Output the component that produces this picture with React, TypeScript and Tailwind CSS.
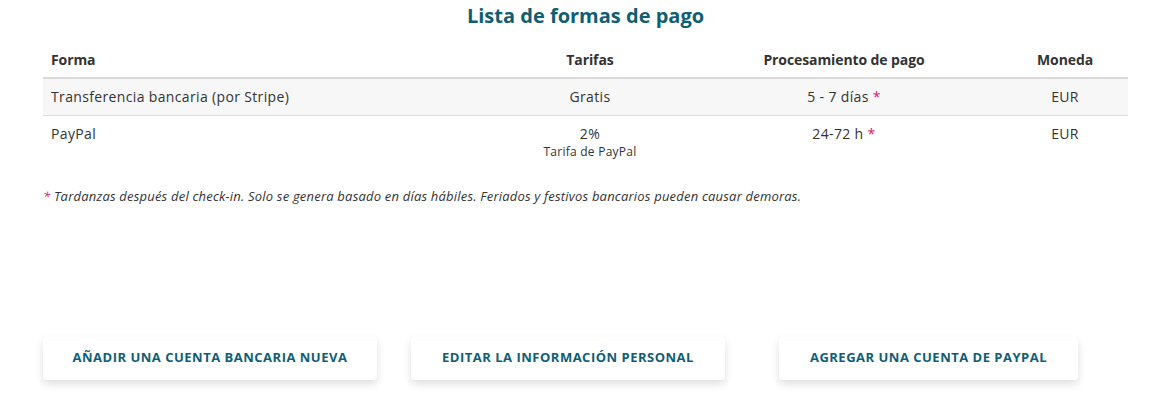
const font = { fontFamily: '"Open Sans", "Liberation Sans", sans-serif' };

function Star() {
  return <span className="text-[#d5206f]">*</span>;
}

const rows = [
  { forma: "Transferencia bancaria (por Stripe)", tarifa: "Gratis", nota: "", proc: "5 - 7 días", moneda: "EUR" },
  { forma: "PayPal", tarifa: "2%", nota: "Tarifa de PayPal", proc: "24-72 h", moneda: "EUR" },
];

const btn =
  "h-[43px] rounded bg-white shadow-[0_4px_9px_rgba(0,0,0,0.13)] text-[13px] font-bold tracking-[0.5px] text-[#0f5e75]";

export default function App() {
  return (
    <div className="w-[1153px] h-[416px] bg-white text-[#333] overflow-hidden" style={font}>
      <div className="pl-[43px] pr-[25px] pt-[3px]">
        <h1 className="text-center text-[20px] font-bold leading-[26px] text-[#0f5e75]">Lista de formas de pago</h1>

        <table className="w-full mt-[13px] border-collapse text-[14px] leading-[18px] tracking-[0.35px]">
          <thead>
            <tr className="border-b-2 border-[#d9d9d9] text-[14px] tracking-[-0.1px]">
              <th className="w-[451px] h-[36px] px-2 text-left font-bold">Forma</th>
              <th className="w-[192px] font-bold text-center">Tarifas</th>
              <th className="w-[316px] font-bold text-center">Procesamiento de pago</th>
              <th className="font-bold text-center">Moneda</th>
            </tr>
          </thead>
          <tbody>
            {rows.map((r, i) => (
              <tr key={r.forma} className={i === 0 ? "bg-[#f7f7f7] border-b border-[#dedede]" : ""}>
                <td className="px-2 h-[37px] align-top pt-[9px]">{r.forma}</td>
                <td className="text-center align-top pt-[9px]">
                  <div>{r.tarifa}</div>
                  {r.nota && <div className="text-[12px] leading-[18px] tracking-[0.25px] pb-[5px]">{r.nota}</div>}
                </td>
                <td className="text-center align-top pt-[9px]">
                  {r.proc} <Star />
                </td>
                <td className="text-center align-top pt-[9px]">{r.moneda}</td>
              </tr>
            ))}
          </tbody>
        </table>

        <p className="mt-[21px] text-[13px] leading-[18px] tracking-[0.2px] italic">
          <Star /> Tardanzas después del check-in. Solo se genera basado en días hábiles. Feriados y festivos bancarios pueden causar demoras.
        </p>

        <div className="flex mt-[132px]">
          <button className={`${btn} w-[334px]`}>AÑADIR UNA CUENTA BANCARIA NUEVA</button>
          <button className={`${btn} ml-[34px] w-[314px]`}>EDITAR LA INFORMACIÓN PERSONAL</button>
          <button className={`${btn} ml-[54px] w-[299px]`}>AGREGAR UNA CUENTA DE PAYPAL</button>
        </div>
      </div>
    </div>
  );
}
